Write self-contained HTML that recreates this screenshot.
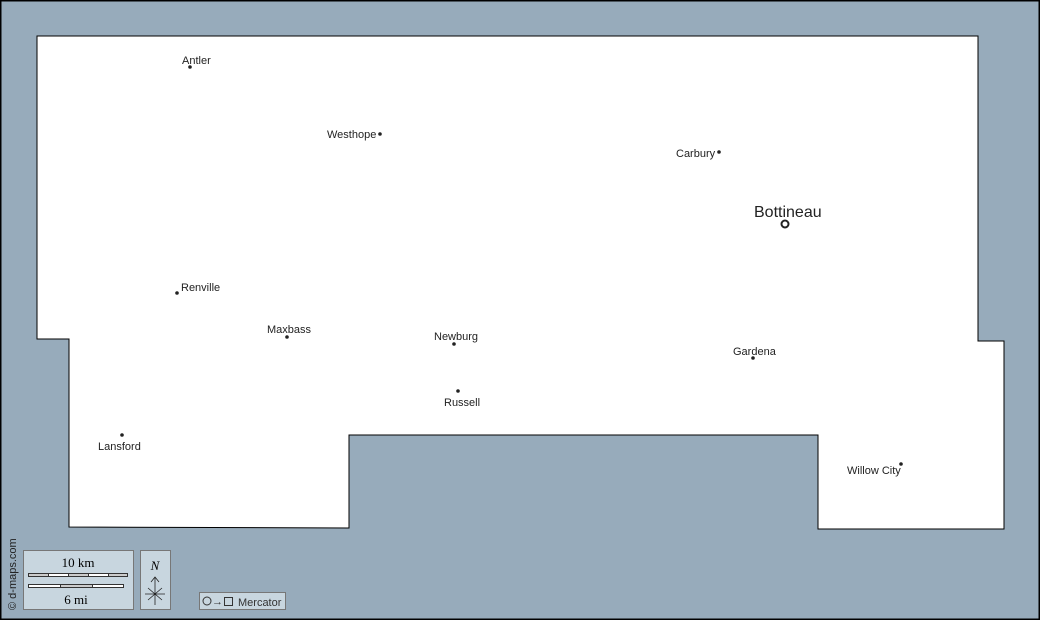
<!DOCTYPE html><html><head><style>body{margin:0}svg{display:block}</style></head><body>
<svg width="1040" height="620" xmlns="http://www.w3.org/2000/svg" font-family="Liberation Sans, sans-serif">
<rect x="0.5" y="0.5" width="1039" height="619" fill="#97abbb" stroke="#000" stroke-width="2"/>
<polygon points="37,36 978,36 978,341 1004,341 1004,529 818,529 818,435 349,435 349,528 69,527 69,339 37,339" fill="#fff" stroke="#000" stroke-width="1"/>
<g font-size="11" fill="#222">
<circle cx="190" cy="67" r="1.8"/><text x="182" y="64">Antler</text>
<circle cx="380" cy="134" r="1.8"/><text x="327" y="138">Westhope</text>
<circle cx="719" cy="152" r="1.8"/><text x="676" y="157">Carbury</text>
<circle cx="177" cy="293" r="1.8"/><text x="181" y="291">Renville</text>
<circle cx="287" cy="337" r="1.8"/><text x="267" y="333">Maxbass</text>
<circle cx="454" cy="344" r="1.8"/><text x="434" y="340">Newburg</text>
<circle cx="753" cy="358" r="1.8"/><text x="733" y="355">Gardena</text>
<circle cx="458" cy="391" r="1.8"/><text x="444" y="406">Russell</text>
<circle cx="122" cy="435" r="1.8"/><text x="98" y="450">Lansford</text>
<circle cx="901" cy="464" r="1.8"/><text x="847" y="474">Willow City</text>
</g>
<text x="754" y="217" font-size="16" fill="#222">Bottineau</text>
<circle cx="785" cy="224" r="3.5" fill="#fff" stroke="#222" stroke-width="2"/>
<text transform="translate(16,610) rotate(-90)" font-size="11" fill="#222">© d-maps.com</text>
<rect x="23.5" y="550.5" width="110" height="59" fill="#c8d6df" stroke="#777"/>
<text x="78" y="567" font-size="13" text-anchor="middle" font-family="Liberation Serif, serif">10 km</text>
<rect x="28.5" y="573.5" width="99" height="3" fill="#fff" stroke="#333"/>
<rect x="28.5" y="573.5" width="20" height="3" fill="#ccc" stroke="#333"/><rect x="68.5" y="573.5" width="20" height="3" fill="#ccc" stroke="#333"/><rect x="108.5" y="573.5" width="19" height="3" fill="#ccc" stroke="#333"/>
<rect x="28.5" y="584.5" width="95" height="3" fill="#fff" stroke="#333"/>
<rect x="60.5" y="584.5" width="32" height="3" fill="#ccc" stroke="#333"/>
<text x="76" y="604" font-size="13" text-anchor="middle" font-family="Liberation Serif, serif">6 mi</text>
<rect x="140.5" y="550.5" width="30" height="59" fill="#c8d6df" stroke="#777"/>
<text x="155" y="570" font-size="13" font-style="italic" text-anchor="middle" font-family="Liberation Serif, serif">N</text>
<path d="M155 605V577M151 582l4-5 4 5M145 594h20M148 588l14 12M162 588l-14 12" stroke="#222" fill="none" stroke-width="0.8"/>
<rect x="199.5" y="592.5" width="86" height="17" fill="#c8d6df" stroke="#777"/>
<circle cx="207" cy="601" r="4" fill="none" stroke="#333"/>
<text x="212" y="605" font-size="11" fill="#333">→</text>
<rect x="224.5" y="597.5" width="8" height="8" fill="none" stroke="#333"/>
<text x="238" y="606" font-size="11" fill="#333">Mercator</text>
</svg>
</body></html>
